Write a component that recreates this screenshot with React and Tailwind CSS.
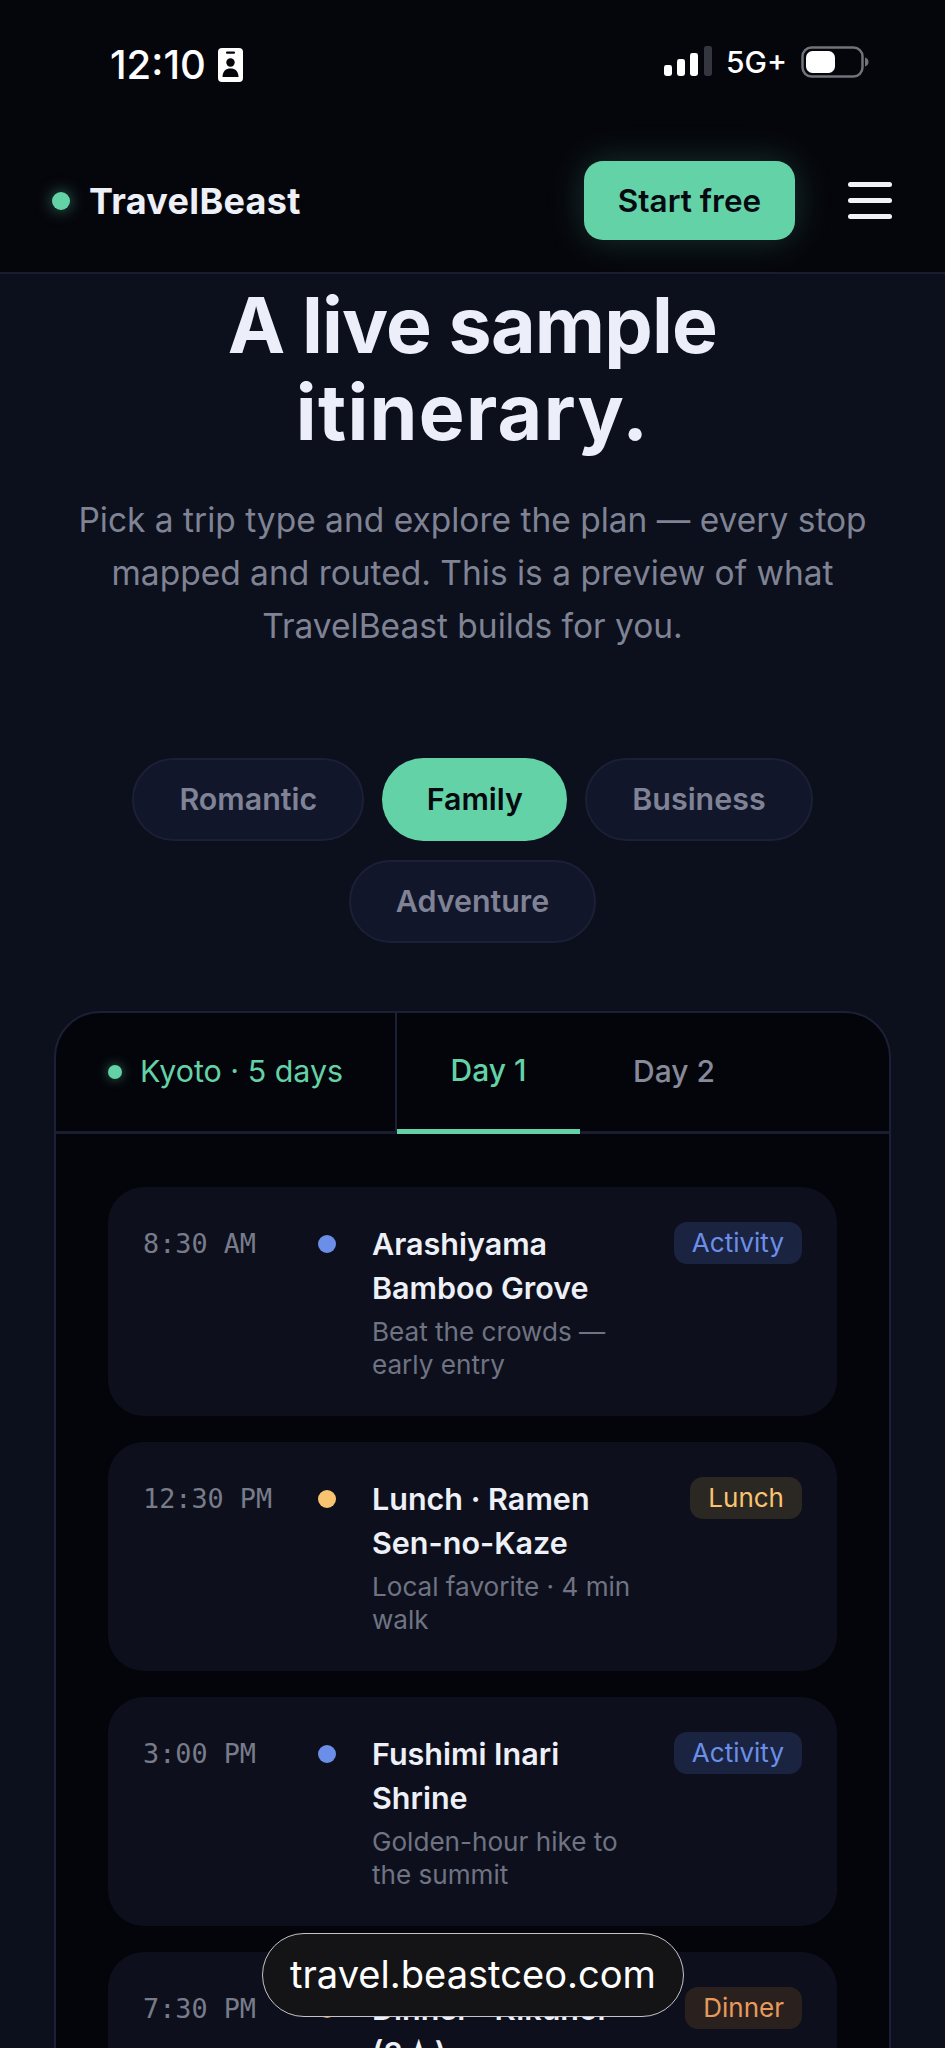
const sans = "font-['Inter','Noto_Sans',sans-serif]";

function Item({ time, dot, title, desc, badge, badgeClass }) {
  return (
    <div className="flex h-[229px] shrink-0 items-start rounded-[36px] bg-[#0d101c] pl-[35px] pr-[35px] pt-[35px]">
      <div className="w-[175px] shrink-0 pt-[4px] font-['DejaVu_Sans_Mono',monospace] text-[26.8px] leading-[36px] text-[#787c8a]">{time}</div>
      <div className={`mt-[13px] h-[18px] w-[18px] shrink-0 rounded-full ${dot}`} />
      <div className="ml-[36px] w-[265px] shrink-0">
        <div className="text-[30.5px] font-semibold leading-[44px] text-[#eef0f8]">{title}</div>
        <div className="mt-[5px] text-[26.1px] leading-[33px] text-[#6f7383]">{desc}</div>
      </div>
      <div className="ml-auto">
        <div className={`rounded-[13px] px-[18px] py-[3px] text-[26px] leading-[36px] ${badgeClass}`}>{badge}</div>
      </div>
    </div>
  );
}

function Pill({ children, active }) {
  return active ? (
    <div className="flex h-[83px] items-center rounded-full bg-[#64d2a7] px-[44.5px] text-[30.4px] font-semibold text-[#06090f]">{children}</div>
  ) : (
    <div className="flex h-[83px] items-center rounded-full border-2 border-[#1c2036] bg-[#12162a] px-[45px] text-[30.4px] font-semibold text-[#7f8395]">{children}</div>
  );
}

export default function App() {
  const activity = "bg-[#1a2340] text-[#6b8fe8]";
  return (
    <div className={`relative h-[2048px] w-full overflow-hidden bg-[#0c0f1c] ${sans}`}>
      <header className="h-[274px] border-b-2 border-[#1a1d30] bg-[#05060c]">
        <div className="flex h-[129px] items-start justify-between pl-[110px] pr-[76px] pt-[44px]">
          <div className="flex items-center gap-[12px]">
            <span className="text-[40px] font-medium leading-[42px] text-white">12:10</span>
            <svg width="25" height="34" viewBox="0 0 25 34">
              <rect width="25" height="34" rx="4" fill="#fff" />
              <rect x="8" y="3.5" width="9" height="2.2" rx="1" fill="#05060c" />
              <circle cx="12.5" cy="14.500" r="4.2" fill="#05060c" />
              <path d="M4.500 29c0-6 3.500-8.500 8-8.500s8 2.500 8 8.500z" fill="#05060c" />
            </svg>
          </div>
          <div className="flex items-center gap-[14px]">
            <svg width="48" height="32" viewBox="0 0 48 32">
              <rect x="0" y="19" width="8" height="11" rx="2.4" fill="#fff" />
              <rect x="13" y="13" width="8" height="17" rx="2.4" fill="#fff" />
              <rect x="26" y="7" width="8" height="23" rx="2.4" fill="#fff" />
              <rect x="40" y="0" width="8" height="30" rx="2.4" fill="#33363e" />
            </svg>
            <span className="text-[30px] font-medium leading-[36px] text-white">5G+</span>
            <svg width="68" height="32" viewBox="0 0 68 32">
              <rect x="1.500" y="1.500" width="60" height="29" rx="9" fill="none" stroke="#70737a" strokeWidth="2.500" />
              <rect x="5" y="5" width="29" height="22" rx="6.500" fill="#fff" />
              <path d="M64 11.500c2.500 .6 3.500 2.400 3.500 4.500s-1 3.900-3.500 4.500z" fill="#70737a" />
            </svg>
          </div>
        </div>
        <div className="flex h-[143px] items-center pl-[52px] pr-[53px]">
          <div className="h-[18px] w-[18px] rounded-full bg-[#64d2a7] shadow-[0_0_16px_rgba(100,210,167,0.55)]" />
          <div className="ml-[19px] text-[36px] font-bold leading-none tracking-[0.3px] text-[#eef0f8]">TravelBeast</div>
          <div className="ml-auto flex h-[79px] w-[211px] items-center justify-center rounded-[19px] bg-[#64d2a7] text-[31.5px] font-semibold text-[#06090f] shadow-[0_0_36px_rgba(100,210,167,0.22)]">Start free</div>
          <div className="ml-[53px] flex w-[44px] flex-col gap-[11px]">
            <div className="h-[5px] rounded-sm bg-[#f2f3f8]" />
            <div className="h-[5px] rounded-sm bg-[#f2f3f8]" />
            <div className="h-[5px] rounded-sm bg-[#f2f3f8]" />
          </div>
        </div>
      </header>

      <main className="flex flex-col items-center">
        <h1 className="mt-[8px] text-center text-[77px] font-bold leading-[87px] tracking-[-0.8px] text-[#eceefa]">
          A live sample
          <br />
          <span className="tracking-[1.3px]">itinerary.</span>
        </h1>
        <p className="mt-[38px] text-center text-[33.5px] leading-[53px] text-[#7f8394]">
          Pick a trip type and explore the plan — every stop
          <br />
          mapped and routed. This is a preview of what
          <br />
          TravelBeast builds for you.
        </p>

        <div className="mt-[105px] flex w-[760px] flex-wrap justify-center gap-x-[18px] gap-y-[19px]">
          <Pill>Romantic</Pill>
          <Pill active>Family</Pill>
          <Pill>Business</Pill>
          <Pill>Adventure</Pill>
        </div>

        <section className="mt-[68px] w-[837px] overflow-hidden rounded-t-[46px] border-x-2 border-t-2 border-[#1c2036] bg-[#04050b]">
          <div className="flex h-[121px] border-b-[3px] border-[#1a1d30]">
            <div className="flex w-[341px] shrink-0 items-center border-r-2 border-[#1c2036] pl-[52px]">
              <div className="h-[14px] w-[14px] rounded-full bg-[#64d2a7] shadow-[0_0_12px_rgba(100,210,167,0.5)]" />
              <div className="ml-[18px] text-[30.4px] text-[#64d2a7]">Kyoto · 5 days</div>
            </div>
            <div className="flex h-[121px] w-[183px] items-center justify-center border-b-[5px] border-[#64d2a7] pb-[2px] text-[30px] font-medium text-[#64d2a7]">Day 1</div>
            <div className="flex w-[183px] items-center justify-center pb-[2px] pl-[5px] text-[30px] font-medium text-[#878a9a]">Day 2</div>
          </div>
          <div className="flex flex-col gap-[26px] px-[52px] pt-[53px]">
            <Item time="8:30 AM" dot="bg-[#6b8fe8]" title="Arashiyama Bamboo Grove" desc="Beat the crowds — early entry" badge="Activity" badgeClass={activity} />
            <Item time="12:30 PM" dot="bg-[#f8c471]" title="Lunch · Ramen Sen-no-Kaze" desc="Local favorite · 4 min walk" badge="Lunch" badgeClass="bg-[#2b2722] text-[#f8c471]" />
            <Item time="3:00 PM" dot="bg-[#6b8fe8]" title="Fushimi Inari Shrine" desc="Golden-hour hike to the summit" badge="Activity" badgeClass={activity} />
            <Item time="7:30 PM" dot="bg-[#e89a5c]" title="Dinner · Kikunoi (3★)" desc="Kaiseki tasting" badge="Dinner" badgeClass="bg-[#2a211f] text-[#e89a5c]" />
          </div>
        </section>
      </main>

      <div className="absolute left-[262px] top-[1933px] flex h-[84px] w-[422px] items-center justify-center rounded-[42px] border-[1.5px] border-[#c4c4c8] bg-[#141416] text-[38.1px] text-white">
        travel.beastceo.com
      </div>
    </div>
  );
}
